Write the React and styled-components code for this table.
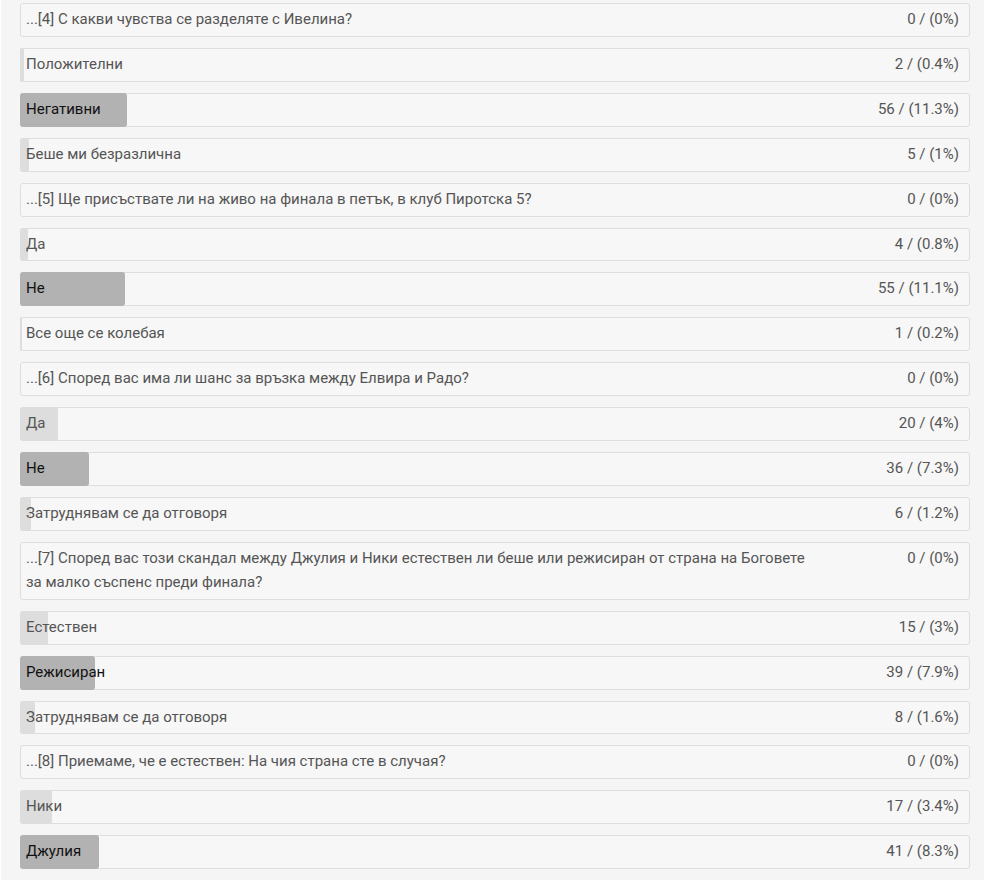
import React from "react";
import styled, { createGlobalStyle } from "styled-components";

const Global = createGlobalStyle`
  html, body { margin: 0; padding: 0; background: #ffffff; }
  * { box-sizing: border-box; }
`;

const Page = styled.div`
  margin-left: 1px;
  width: 983px;
  background: #f5f5f5;
  padding: 3px 14px 11px 19px;
  font-family: Roboto, "Open Sans", Arial, sans-serif;
  font-size: 15px;
  display: flex;
  flex-direction: column;
  gap: 11px;
`;

const Row = styled.div`
  position: relative;
  display: grid;
  grid-template-columns: 790px 1fr;
  align-items: start;
  background: #f7f7f7;
  border: 1px solid #dedede;
  border-radius: 3px;
  padding: 4px 10px 4px 5px;
  line-height: 23.9px;
  color: #555555;
`;

const Bar = styled.div`
  position: absolute;
  top: -1px;
  left: -1px;
  bottom: -1px;
  border-radius: 3px;
  background: ${(p) => (p.$top ? "#b2b2b2" : "#dddddd")};
`;

const Label = styled.span`
  position: relative;
  color: ${(p) => (p.$top ? "#111111" : "#555555")};
`;

const Count = styled.span`
  position: relative;
  text-align: right;
  white-space: nowrap;
`;

const groups = [
  {
    q: "...[4] С какви чувства се разделяте с Ивелина?",
    a: [
      ["Положителни", 2, 0.4],
      ["Негативни", 56, 11.3],
      ["Беше ми безразлична", 5, 1],
    ],
  },
  {
    q: "...[5] Ще присъствате ли на живо на финала в петък, в клуб Пиротска 5?",
    a: [
      ["Да", 4, 0.8],
      ["Не", 55, 11.1],
      ["Все още се колебая", 1, 0.2],
    ],
  },
  {
    q: "...[6] Според вас има ли шанс за връзка между Елвира и Радо?",
    a: [
      ["Да", 20, 4],
      ["Не", 36, 7.3],
      ["Затруднявам се да отговоря", 6, 1.2],
    ],
  },
  {
    q: "...[7] Според вас този скандал между Джулия и Ники естествен ли беше или режисиран от страна на Боговете за малко съспенс преди финала?",
    a: [
      ["Естествен", 15, 3],
      ["Режисиран", 39, 7.9],
      ["Затруднявам се да отговоря", 8, 1.6],
    ],
  },
  {
    q: "...[8] Приемаме, че е естествен: На чия страна сте в случая?",
    a: [
      ["Ники", 17, 3.4],
      ["Джулия", 41, 8.3],
    ],
  },
];

export default function App() {
  return (
    <>
      <Global />
      <Page>
        {groups.map((g, gi) => {
          const max = Math.max(...g.a.map((x) => x[1]));
          return (
            <React.Fragment key={gi}>
              <Row>
                <Label>{g.q}</Label>
                <Count>0 / (0%)</Count>
              </Row>
              {g.a.map(([label, n, pct], ai) => {
                const top = n === max;
                return (
                  <Row key={ai}>
                    <Bar $top={top} style={{ width: `${pct}%` }} />
                    <Label $top={top}>{label}</Label>
                    <Count>
                      {n} / ({pct}%)
                    </Count>
                  </Row>
                );
              })}
            </React.Fragment>
          );
        })}
      </Page>
    </>
  );
}
